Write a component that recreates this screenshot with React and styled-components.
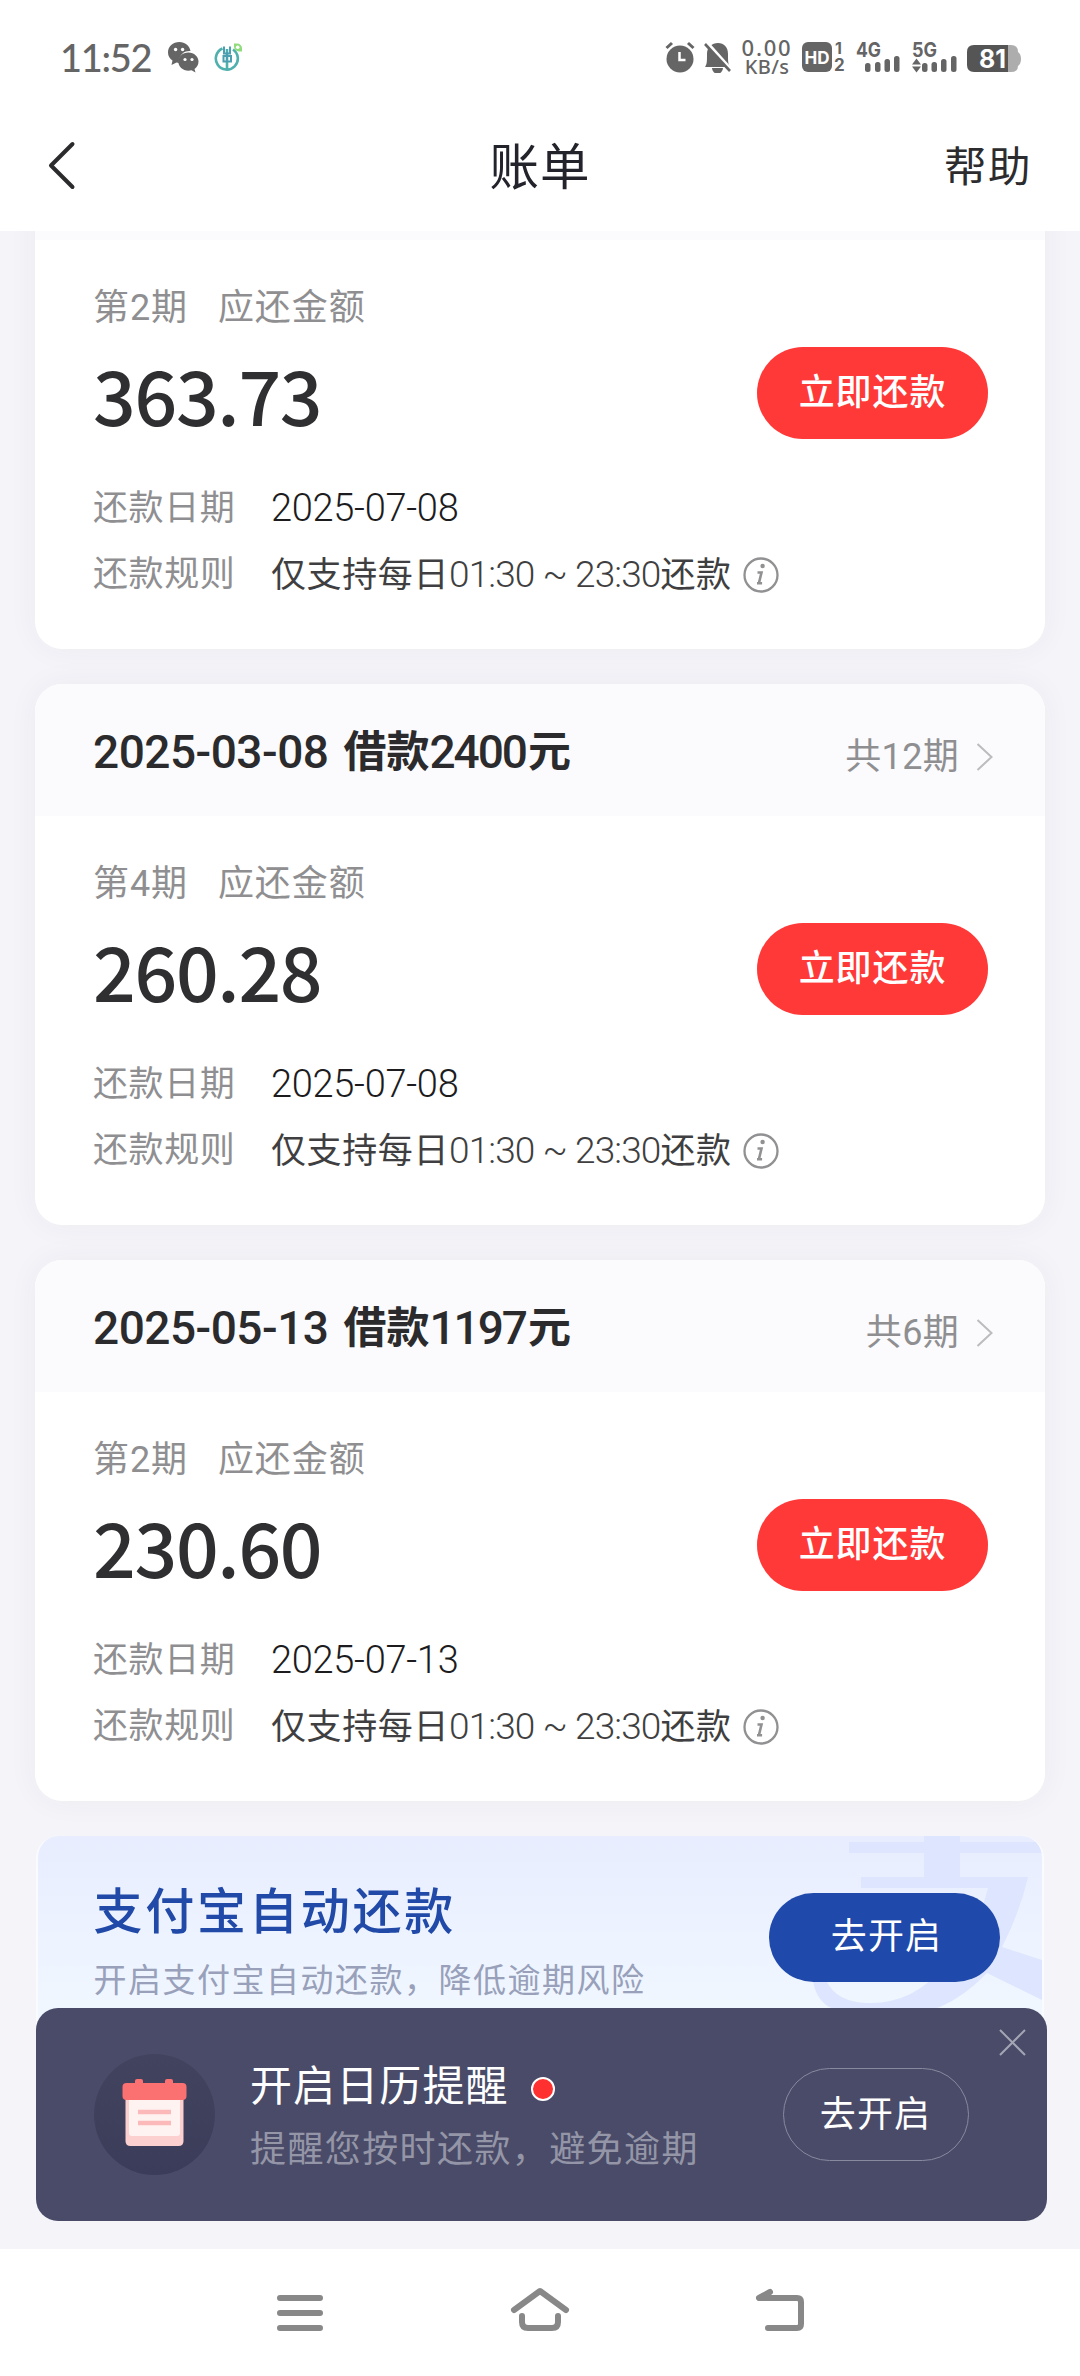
import React from 'react';
import styled, { createGlobalStyle } from 'styled-components';

const Global = createGlobalStyle`
  * { box-sizing: border-box; }
  html, body { margin: 0; padding: 0; background: #fff; }
  body { font-family: Roboto, "Noto Sans CJK SC", sans-serif; color: #2f2f31; }
  svg { display: block; flex: none; }
  button { border: 0; padding: 0; font-family: inherit; }
`;

const Screen = styled.div`
  width: 1080px;
  height: 2376px;
  display: flex;
  flex-direction: column;
  overflow: hidden;
  background: #fff;
`;

const StatusBar = styled.div`
  height: 114px;
  flex: none;
  display: flex;
  align-items: center;
  justify-content: space-between;
  padding: 0 58px 0 60px;
  color: #656565;
`;

const StatusSide = styled.div`
  display: flex;
  align-items: center;
`;

const Clock = styled.span`
  font: 500 38px/1 Lato, Inter, sans-serif;
  letter-spacing: -1.3px;
  width: 107px;
  white-space: nowrap;
`;

const StatusApps = styled.div`
  display: flex;
  align-items: center;
  gap: 15px;
`;

const Speed = styled.div`
  width: 52px;
  margin-left: 10px;
  margin-right: 9px;
  display: flex;
  flex-direction: column;
  align-items: center;
  white-space: nowrap;
`;

const SpeedLine = styled.span`
  font: 500 ${(p) => p.$size}px/${(p) => p.$line}px "Noto Sans", sans-serif;
  letter-spacing: ${(p) => p.$track}px;
`;

const TitleBar = styled.div`
  height: 117px;
  flex: none;
  display: grid;
  grid-template-columns: 1fr auto 1fr;
  align-items: center;
  padding: 0 48px 9px 48px;
  line-height: 60px;
`;

const BackIcon = styled.svg`
  margin-top: -6px;
`;

const Title = styled.h1`
  margin: 0;
  font-size: 49.5px;
  font-weight: 400;
  letter-spacing: 1px;
  color: #23232c;
`;

const Help = styled.span`
  justify-self: end;
  font-size: 42.5px;
  letter-spacing: 1.5px;
  color: #2c2c2e;
`;

const Content = styled.main`
  height: 2018px;
  flex: none;
  position: relative;
  overflow: hidden;
  background: #f4f4f9;
  padding: 0 35px;
  display: flex;
  flex-direction: column;
  justify-content: flex-start;
`;

const Cards = styled.div`
  display: flex;
  flex-direction: column;
  gap: 35px;
  margin-top: -123px;
`;

const Card = styled.section`
  height: 541px;
  width: 1010px;
  border-radius: 27px;
  background: #fff;
  box-shadow: 0 0 30px rgba(60, 55, 75, 0.05);
  overflow: hidden;
`;

const CardHead = styled.header`
  height: 132px;
  background: #fbfbfd;
  display: flex;
  justify-content: space-between;
  align-items: center;
  padding: 6px 52px 0 58px;
`;

const CardTitle = styled.div`
  display: flex;
  align-items: center;
  height: 50px;
  margin-top: -2px;
  font-size: 43px;
  line-height: 50px;
  font-weight: 700;
  color: #2b2b2d;
`;

const TitleDigits = styled.span`
  font-size: 46px;
  font-weight: 500;
  letter-spacing: ${(p) => p.$track}px;
  margin-right: ${(p) => p.$gap || 0}px;
`;

const Periods = styled.div`
  display: flex;
  align-items: center;
  margin-top: 7px;
  font-size: 36px;
  line-height: 50px;
  letter-spacing: 0.3px;
  color: #8f8f92;
`;

const CardBody = styled.div`
  padding: 42px 57px 0 58px;
`;

const Caption = styled.div`
  display: flex;
  gap: 30px;
  height: 52px;
  font-size: 36px;
  line-height: 52px;
  letter-spacing: 0.9px;
  color: #8f8f91;
`;

const AmountRow = styled.div`
  display: flex;
  justify-content: space-between;
  align-items: flex-start;
  height: 106px;
  padding-top: 13px;
`;

const Amount = styled.div`
  font-family: "Noto Sans CJK SC", Roboto, sans-serif;
  font-size: 75px;
  line-height: 92px;
  margin-top: 1px;
  font-weight: 500;
  letter-spacing: -1.3px;
  color: #2f2f31;
`;

const PayButton = styled.button`
  width: 231px;
  height: 92px;
  border-radius: 46px;
  background: #ff3838;
  color: #fff;
  font-size: 36px;
  line-height: 92px;
  font-weight: 500;
  letter-spacing: 0.9px;
`;

const InfoRow = styled.div`
  display: flex;
  align-items: center;
  height: 66px;
  font-size: 35px;
  line-height: 66px;
  white-space: nowrap;
  color: #3f3f41;
`;

const InfoRows = styled.div`
  padding-top: 36px;
`;

const InfoLabel = styled.span`
  width: 178px;
  color: #8f8f92;
  letter-spacing: 0.6px;
`;

const DateText = styled.span`
  margin-top: -3px;
  font-size: 38px;
  font-weight: 300;
  letter-spacing: -0.3px;
  color: #1c1c1e;
`;

const RuleText = styled.span`
  letter-spacing: 0.6px;
  margin-right: 11px;
`;

const RuleDigits = styled.span`
  font-size: 37px;
  font-weight: 300;
  letter-spacing: ${(p) => p.$track}px;
`;

const Banner = styled.section`
  margin-top: 35px;
  margin-left: 0.5px;
  width: 1008.5px;
  height: 213px;
  flex: none;
  position: relative;
  border-radius: 22px;
  border: 2px solid #fafbff;
  border-top: 0;
  background: linear-gradient(#e8edff, #f0f7ff 82%);
  overflow: hidden;
  display: flex;
  justify-content: space-between;
  padding: 46px 42px 0 56px;
`;

const Watermark = styled.svg`
  position: absolute;
  right: 0;
  top: 0;
`;

const BannerTitle = styled.h2`
  margin: 0;
  font-size: 49px;
  line-height: 62px;
  font-weight: 500;
  letter-spacing: 2.8px;
  color: #2049a8;
`;

const BannerNote = styled.p`
  margin: 13px 0 0;
  font-size: 33px;
  line-height: 48px;
  letter-spacing: 1.5px;
  color: #98a0ba;
`;

const BannerButton = styled.button`
  position: relative;
  margin-top: 11px;
  width: 231px;
  height: 89px;
  border-radius: 45px;
  background: #1f49aa;
  color: #fff;
  font-size: 36px;
  line-height: 88px;
  padding: 0 0 1px 4px;
  font-weight: 400;
  letter-spacing: 1.2px;
`;

const Reminder = styled.aside`
  position: absolute;
  left: 36px;
  top: 1777px;
  width: 1010.5px;
  height: 213px;
  border-radius: 22px;
  background: #494b68;
  display: flex;
  align-items: center;
  padding: 0 78px 0 58px;
`;

const CalendarBadge = styled.div`
  width: 121px;
  height: 121px;
  border-radius: 50%;
  background: linear-gradient(#42445f, #3a3c59);
  display: flex;
  justify-content: center;
  align-items: center;
  padding-bottom: 4px;
  margin-right: 35px;
`;

const ReminderText = styled.div`
  flex: 1;
  margin-top: 8px;
  white-space: nowrap;
`;

const ReminderTitle = styled.div`
  display: flex;
  align-items: center;
  gap: 22px;
  font-size: 42px;
  line-height: 62px;
  letter-spacing: 1.1px;
  color: #fff;
`;

const Dot = styled.i`
  width: 24px;
  height: 24px;
  border-radius: 50%;
  border: 2px solid #fff;
  background: #ff3030;
  margin-top: 5px;
`;

const ReminderNote = styled.div`
  font-size: 36px;
  line-height: 64px;
  letter-spacing: 1.4px;
  color: #9495a6;
`;

const OutlineButton = styled.button`
  width: 186px;
  height: 93px;
  border-radius: 47px;
  border: 1.5px solid #888aa0;
  background: transparent;
  color: #fff;
  font-size: 36px;
  letter-spacing: 1.2px;
  line-height: 90px;
`;

const Close = styled.svg`
  position: absolute;
  right: 21px;
  top: 21px;
`;

const NavBar = styled.nav`
  flex: 1;
  display: flex;
  align-items: center;
  justify-content: center;
  gap: 180px;
  padding-top: 1px;
`;

const InfoIcon = () => (
  <svg width="36" height="36" viewBox="0 0 36 36" fill="none" stroke="#919193">
    <circle cx="18" cy="18" r="16.5" strokeWidth="2.3" />
    <circle cx="19.6" cy="9" r="2.2" fill="#919193" stroke="none" />
    <path d="M14.5 15.5h4l-2.6 10.7h3.2M14 26.2h3" strokeWidth="2.6" />
  </svg>
);

const WechatIcon = () => (
  <svg width="32" height="32" viewBox="0 0 32 32">
    <path fill="#656565" d="M12.500 1C5.800 1 1 5.600 1 11.500c0 3.500 1.700 6 4.500 8L4.500 24l5-2.400 2.500.4A10.500 10.500 0 0 1 23.500 10C22.500 4.500 18 1 12.500 1z" />
    <path fill="#656565" d="M21.500 11.500c-6 0-10.200 4-10.200 9s4.200 9.200 10.200 9.200l3-.4 4 2.200-1-3.500c2.500-2 4-4.400 4-7.500 0-5-4.500-9-10-9z" />
    <g fill="#fff"><circle cx="8.600" cy="8.500" r="1.700" /><circle cx="15.600" cy="8.500" r="1.700" /><circle cx="18" cy="18.500" r="1.600" /><circle cx="25" cy="18.500" r="1.600" /></g>
  </svg>
);

const BankIcon = () => (
  <svg width="30" height="30" viewBox="0 0 30 30" fill="none">
    <path d="M8.500 6.500a11 11 0 1 0 10.500 1M13 28V7" stroke="#4fb0ad" strokeWidth="2.600" />
    <path d="M10 4.500v7h6v-7M9.500 14h7.500v5.500H9.500zM13 10v8" stroke="#4b9fb0" strokeWidth="2" />
    <path d="M20 1.500h3a5 5 0 0 1 5 5v3h-3a5 5 0 0 1-5-5z" fill="#8fdc7c" />
    <circle cx="23.700" cy="5.300" r="1.800" fill="#fff" />
  </svg>
);

const AlertIcons = () => (
  <svg width="66" height="32" viewBox="0 0 66 32" fill="#656565">
    <circle cx="15" cy="18" r="13.500" />
    <path d="M1.500 7 7 2M28.500 7 23 2" stroke="#656565" strokeWidth="3" />
    <path d="M14.500 11v8h6" stroke="#fff" strokeWidth="2.500" fill="none" />
    <path d="M40 26c2-3 2-5 2-13 0-7 5-11 11-11s10 4 10 11c0 7 0 10 2 13zM47 27h11a5.500 5.500 0 0 1-11 0z" />
    <path d="M42 2 66 29" stroke="#fff" strokeWidth="4" />
    <path d="M40 3 65 30" stroke="#656565" strokeWidth="2.600" />
  </svg>
);

const Glyph = styled.text`
  font-family: Inter, Roboto, sans-serif;
  font-weight: 700;
`;

const SignalIcons = () => (
  <svg width="220" height="50" viewBox="801 33 220 50" fill="#656565">
    <rect x="801" y="43" width="30" height="30" rx="6" />
    <Glyph x="803.5" y="65" fontSize="18" fill="#fff" textLength="25" lengthAdjust="spacingAndGlyphs">HD</Glyph>
    <Glyph x="834" y="55" fontSize="16">1</Glyph>
    <Glyph x="833" y="72" fontSize="17">2</Glyph>
    <Glyph x="855" y="57.500" fontSize="20" textLength="25" lengthAdjust="spacingAndGlyphs">4G</Glyph>
    <rect x="864" y="64" width="5.500" height="9" rx="2.500" />
    <rect x="874" y="63" width="5.500" height="10" rx="2.500" />
    <rect x="883.500" y="60" width="5.500" height="13" rx="2.500" />
    <rect x="893" y="57" width="5.500" height="16" rx="2.500" />
    <Glyph x="911" y="57.500" fontSize="20" textLength="25" lengthAdjust="spacingAndGlyphs">5G</Glyph>
    <path d="M911 65.500l4.500-6 4.500 6zM911 67.500l4.500 6 4.500-6z" />
    <rect x="921" y="64" width="5.500" height="9" rx="2.500" />
    <rect x="930.500" y="63" width="5.500" height="10" rx="2.500" />
    <rect x="940" y="60" width="5.500" height="13" rx="2.500" />
    <rect x="950" y="57" width="5.500" height="16" rx="2.500" />
    <path fill="#adadad" d="M1004 46h6q7 0 7 7 3 2 3 7t-3 7q0 6-7 6h-6z" />
    <path fill="#555" d="M973 46h34v27h-34q-7 0-7-7V53q0-7 7-7z" />
    <Glyph x="978" y="68.500" fontSize="25" fill="#fff" textLength="27" lengthAdjust="spacingAndGlyphs">81</Glyph>
  </svg>
);

const CalendarIcon = () => (
  <svg width="65" height="67" viewBox="0 0 65 67">
    <path fill="#fdd0d0" d="M3.500 18h58v44q0 5-5 5h-48q-5 0-5-5z" />
    <rect x="7" y="18" width="51" height="39" rx="3" fill="#fff3f2" />
    <rect x="0.500" y="4" width="64" height="17" rx="4" fill="#fb7070" />
    <rect x="13" y="0" width="8" height="10" rx="2" fill="#fb7070" />
    <rect x="43" y="0" width="8" height="10" rx="2" fill="#fb7070" />
    <path d="M16 33h33M16 44h33" stroke="#fcb9b9" strokeWidth="4.500" />
  </svg>
);

const bills = [
  { date: '2025-02-08', sum: '2400', total: '12', period: '2', amount: '363.73', due: '2025-07-08' },
  { date: '2025-03-08', sum: '2400', total: '12', period: '4', amount: '260.28', due: '2025-07-08' },
  { date: '2025-05-13', sum: '1197', total: '6', period: '2', amount: '230.60', due: '2025-07-13' },
];

const Bill = ({ bill, scrolledOff }) => (
  <Card>
    <CardHead>
      {!scrolledOff && (
        <>
          <CardTitle>
            <TitleDigits $track={-0.5} $gap={15}>{bill.date}</TitleDigits>
            借款
            <TitleDigits $track={-2} $gap={2}>{bill.sum}</TitleDigits>
            元
          </CardTitle>
          <Periods>
            共{bill.total}期
            <svg width="34" height="30" viewBox="0 0 34 30" fill="none" stroke="#bcbcbf" strokeWidth="2">
              <path d="m18.500 2 14 13-14 13" />
            </svg>
          </Periods>
        </>
      )}
    </CardHead>
    <CardBody>
      <Caption><span>第{bill.period}期</span><span>应还金额</span></Caption>
      <AmountRow>
        <Amount>{bill.amount}</Amount>
        <PayButton>立即还款</PayButton>
      </AmountRow>
      <InfoRows>
        <InfoRow>
          <InfoLabel>还款日期</InfoLabel>
          <DateText>{bill.due}</DateText>
        </InfoRow>
        <InfoRow>
          <InfoLabel>还款规则</InfoLabel>
          <RuleText>
            仅支持每日<RuleDigits $track={-0.9}>01:30 ~ 23:30</RuleDigits>还款
          </RuleText>
          <InfoIcon />
        </InfoRow>
      </InfoRows>
    </CardBody>
  </Card>
);

export default function App() {
  return (
    <Screen>
      <Global />
      <StatusBar>
        <StatusSide>
          <Clock>11:52</Clock>
          <StatusApps>
            <WechatIcon />
            <BankIcon />
          </StatusApps>
        </StatusSide>
        <StatusSide>
          <AlertIcons />
          <Speed>
            <SpeedLine $size={22} $line={19} $track={1.8}>0.00</SpeedLine>
            <SpeedLine $size={20} $line={19} $track={0.4}>KB/s</SpeedLine>
          </Speed>
          <SignalIcons />
        </StatusSide>
      </StatusBar>
      <TitleBar>
        <BackIcon width="28" height="50" viewBox="0 0 28 50" fill="none" stroke="#2b2b2d" strokeWidth="4" strokeLinecap="round" strokeLinejoin="round">
          <path d="M24.500 4 3 25.500 24.500 47" />
        </BackIcon>
        <Title>账单</Title>
        <Help>帮助</Help>
      </TitleBar>
      <Content>
        <Cards>
          {bills.map((bill, i) => <Bill key={bill.date} bill={bill} scrolledOff={i === 0} />)}
        </Cards>
        <Banner>
          <Watermark width="230" height="180" viewBox="812 1836 230 180" fill="#dde6fe">
            <path d="M849 1842h193v11H849zM924 1836h36v42h-36z" />
            <path d="M861 1877h167Q1020 1912 1002 1947L1042 1960V2000L987 1973Q965 1996 940 2007 880 2030 829 2007 815 1998 813 1980L826 1980Q836 2003 870 2003 915 2003 945 1965 978 1930 988 1888H861z" />
          </Watermark>
          <div>
            <BannerTitle>支付宝自动还款</BannerTitle>
            <BannerNote>开启支付宝自动还款，降低逾期风险</BannerNote>
          </div>
          <BannerButton>去开启</BannerButton>
        </Banner>
        <Reminder>
          <CalendarBadge><CalendarIcon /></CalendarBadge>
          <ReminderText>
            <ReminderTitle>开启日历提醒<Dot /></ReminderTitle>
            <ReminderNote>提醒您按时还款，避免逾期</ReminderNote>
          </ReminderText>
          <OutlineButton>去开启</OutlineButton>
          <Close width="27" height="27" viewBox="0 0 27 27" stroke="#a4a5b4" strokeWidth="2">
            <path d="m1 1 25 25M26 1 1 26" />
          </Close>
        </Reminder>
      </Content>
      <NavBar>
        <svg width="60" height="60" viewBox="0 0 60 60" stroke="#888" strokeWidth="6" strokeLinecap="round">
          <path d="M10 15h40M10 30h40M10 45h40" />
        </svg>
        <svg width="60" height="60" viewBox="0 0 60 60" fill="none" stroke="#888" strokeWidth="6" strokeLinecap="round" strokeLinejoin="round">
          <path d="M4 27 30 8l26 19M12 33v6q0 6 6 6h24q6 0 6-6v-6" />
        </svg>
        <svg width="60" height="60" viewBox="0 0 60 60" fill="none" stroke="#888" strokeWidth="6" strokeLinecap="round" strokeLinejoin="round">
          <path d="M20 9 9 15h38q4 0 4 4v22q0 4-4 4H18" />
        </svg>
      </NavBar>
    </Screen>
  );
}
